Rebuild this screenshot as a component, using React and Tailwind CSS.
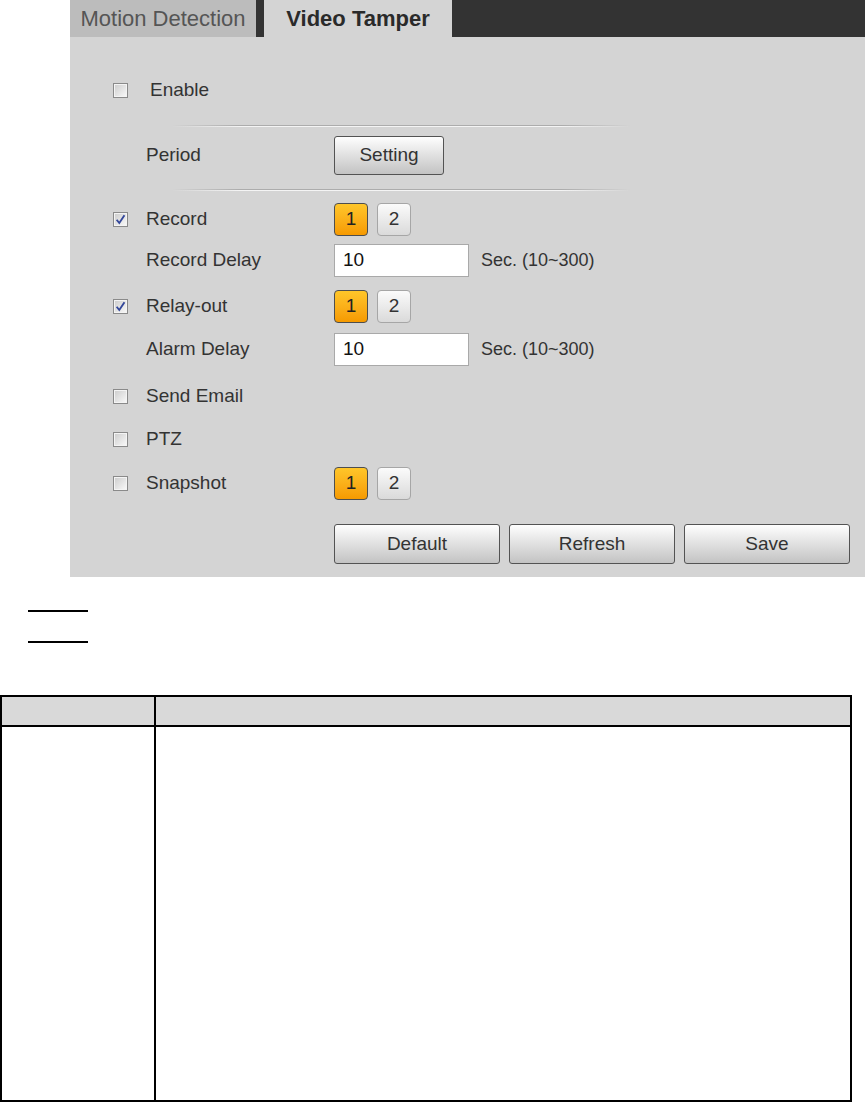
import React from 'react';

const font = { fontFamily: '"Liberation Sans", Arial, sans-serif' };

// small square checkbox, like the old camera web UI
const Check = ({ on }) => (
  <div className="w-[15px] h-[15px] border border-[#8a8a8a] bg-[#f4f4f4] p-px">
    <div className="w-full h-full bg-linear-to-br from-[#cfcfcf] to-[#f7f7f7] flex items-center justify-center">
      {on && (
        <svg width="11" height="11" viewBox="0 0 10 10">
          <path d="M1.5 5.2 L3.9 8.2 L8.6 1.2" fill="none" stroke="#33479a" strokeWidth="1.7" />
        </svg>
      )}
    </div>
  </div>
);

const Chan = () => (
  <div className="flex gap-[9px]">
    <div className="w-[34px] h-[33px] rounded-[4px] border border-[#4e4e4e] bg-linear-to-b from-[#ffc629] to-[#f69a00] flex items-center justify-center text-[19px] text-[#222]">1</div>
    <div className="w-[34px] h-[33px] rounded-[4px] border border-[#a6a6a6] bg-linear-to-b from-[#fbfbfb] to-[#dadada] flex items-center justify-center text-[19px] text-[#333]">2</div>
  </div>
);

const Divider = ({ mt }) => (
  <div className={`${mt} ml-[102px] w-[458px]`}>
    <div className="h-px bg-[linear-gradient(to_right,transparent,#acacac_15%,#acacac_85%,transparent)]" />
    <div className="h-px bg-[linear-gradient(to_right,transparent,#f4f4f4_15%,#f4f4f4_85%,transparent)]" />
  </div>
);

const Row = ({ mt, h = 'h-[33px]', box, on, label, children }) => (
  <div className={`${mt} ${h} flex items-center`}>
    <div className="w-[76px] pl-[43px]">{box && <Check on={on} />}</div>
    <div className="w-[188px] text-[19px] text-[#333]">{label}</div>
    {children}
  </div>
);

const Delay = () => (
  <div className="flex items-center">
    <div className="w-[135px] h-[33px] bg-white border border-[#a9a9a9] pl-[8px] flex items-center text-[19px] text-[#111]">10</div>
    <span className="ml-[12px] text-[18px] text-[#333]">Sec. (10~300)</span>
  </div>
);

const Btn = ({ w, h, children }) => (
  <div className={`${w} ${h} rounded-[3px] border border-[#535353] bg-linear-to-b from-[#fefefe] to-[#c3c3c3] flex items-center justify-center text-[19px] text-[#333]`}>
    {children}
  </div>
);

export default function App() {
  return (
    <div style={font} className="w-[865px] h-[1103px] bg-white relative overflow-hidden">
      <div className="ml-[70px] w-[795px] h-[577px] bg-[#d4d4d4]">
        <div className="h-[37px] bg-[#333] flex">
          <div className="w-[186px] bg-[#bcbcbc] flex items-center justify-center text-[22px] text-[#555]">Motion Detection</div>
          <div className="w-[8px]" />
          <div className="w-[188px] bg-[#d4d4d4] flex items-center justify-center text-[22px] font-bold text-[#2a2a2a]">Video Tamper</div>
        </div>

        <div className="mt-[33px] h-[40px] flex items-center">
          <div className="w-[80px] pl-[43px]"><Check /></div>
          <span className="text-[19px] text-[#333]">Enable</span>
        </div>

        <Divider mt="mt-[15px]" />

        <Row mt="mt-[9px]" h="h-[39px]" label="Period">
          <Btn w="w-[110px]" h="h-[39px]">Setting</Btn>
        </Row>

        <Divider mt="mt-[14px]" />

        <Row mt="mt-[12px]" box on label="Record"><Chan /></Row>
        <Row mt="mt-[8px]" label="Record Delay"><Delay /></Row>
        <Row mt="mt-[13px]" box on label="Relay-out"><Chan /></Row>
        <Row mt="mt-[10px]" label="Alarm Delay"><Delay /></Row>
        <Row mt="mt-[14px]" h="h-[32px]" box label="Send Email" />
        <Row mt="mt-[11px]" h="h-[32px]" box label="PTZ" />
        <Row mt="mt-[12px]" box label="Snapshot"><Chan /></Row>

        <div className="mt-[24px] ml-[264px] flex gap-[9px]">
          <Btn w="w-[166px]" h="h-[40px]">Default</Btn>
          <Btn w="w-[166px]" h="h-[40px]">Refresh</Btn>
          <Btn w="w-[166px]" h="h-[40px]">Save</Btn>
        </div>
      </div>

      <div className="mt-[33px] ml-[28px] w-[60px] h-[2px] bg-black" />
      <div className="mt-[29px] ml-[28px] w-[60px] h-[2px] bg-black" />

      <div className="mt-[52px] w-[852px] border-2 border-black">
        <div className="h-[30px] bg-[#d9d9d9] flex border-b-2 border-black">
          <div className="w-[154px] border-r-2 border-black" />
          <div className="flex-1" />
        </div>
        <div className="h-[373px] flex">
          <div className="w-[154px] border-r-2 border-black" />
          <div className="flex-1" />
        </div>
      </div>
    </div>
  );
}
